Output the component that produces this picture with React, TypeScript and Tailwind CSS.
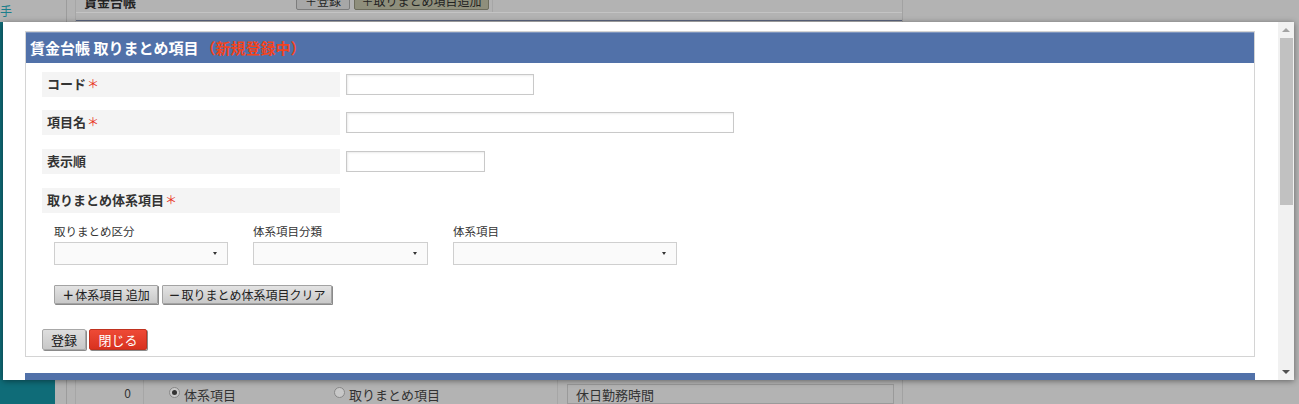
import React from "react";

const jp = { fontFamily: '"Noto Sans CJK JP", "Noto Sans", sans-serif' };

const Req = () => <span className="ml-[1px] text-[12px] font-normal text-[#e8341c]">＊</span>;

const Select = ({ w }: { w: string }) => (
    <div className={`${w} h-[23px] border border-[#cfcfcf] bg-[#fafafa] flex items-center justify-end pr-[10px]`}>
        <span className="block w-0 h-0 border-l-[2px] border-r-[2px] border-t-[3px] border-l-transparent border-r-transparent border-t-[#333]" />
    </div>
);

const App = () => {
    return (
        <div className="relative w-[1299px] h-[404px] overflow-hidden bg-[#b3b3b3] flex" style={jp}>
            {/* dimmed page underneath */}
            <div className="w-[55px] h-full flex flex-col">
                <div className="h-[22px] pt-[4px] text-[12px] leading-[14px] text-[#1c7f8c]">手</div>
                <div className="flex-1 bg-[#0f6c78]" />
            </div>
            <div className="w-[12px] h-full border-r border-[#9c9c9c]" />
            <div className="w-[9px] h-full border-r border-[#a6a6a6]" />
            <div className="w-[827px] h-full border-r border-[#a2a2a2] flex flex-col">
                <div className="h-[13px] border-b border-[#c4c4c4] flex items-start overflow-hidden">
                    <div className="w-[220px] pl-[8px] -mt-[7px] text-[13px] leading-[18px] font-bold text-[#222]">賃金台帳</div>
                    <div className="-mt-[8px] h-[18px] w-[54px] rounded-[2px] border border-[#7d7d7d] bg-[#a7a7a7] text-[12px] leading-[16px] text-[#222] text-center">＋登録</div>
                    <div className="-mt-[8px] ml-[4px] h-[18px] w-[135px] rounded-[2px] border border-[#6d6d5d] bg-[#8f8f7c] text-[12px] leading-[16px] text-[#222] text-center">＋取りまとめ項目追加</div>
                    <div className="h-[13px] ml-[3px] border-r border-[#a6a6a6]" />
                </div>
                <div className="h-[7px]" />
                <div className="h-[2px] bg-[#5c6680]" />
                <div className="h-[360px]" />
                <div className="flex-1 border-t border-[#9f9f9f] flex">
                    <div className="w-[68px] border-r border-[#a6a6a6] text-[12px] text-[#333] text-right pr-[12px] pt-[10px]">0</div>
                    <div className="flex-1 flex items-start pt-[11px] pl-[25px] text-[13px] text-[#333]">
                        <span className="mt-[2px] w-[11px] h-[11px] rounded-full border border-[#888] bg-[#c8c8c8] flex items-center justify-center"><span className="w-[5px] h-[5px] rounded-full bg-[#333]" /></span>
                        <span className="ml-[4px] w-[150px]">体系項目</span>
                        <span className="mt-[2px] w-[11px] h-[11px] rounded-full border border-[#888] bg-[#c8c8c8]" />
                        <span className="ml-[4px] w-[200px]">取りまとめ項目</span>
                    </div>
                    <div className="w-[345px] border-l border-[#a6a6a6] pl-[9px] pt-[10px]">
                        <div className="h-[20px] w-[327px] border border-[#9a9a9a] text-[13px] text-[#333] pl-[8px]">休日勤務時間</div>
                    </div>
                </div>
            </div>

            {/* modal */}
            <div className="absolute left-[3px] top-[22px] w-[1291px] h-[358px] bg-white shadow-[0_1px_6px_rgba(0,0,0,0.45)] flex">
                <div className="flex-1 h-full overflow-hidden pl-[22px] pr-[23px] pt-[9px]">
                    <div className="border border-[#d4d4d4]">
                        <div className="h-[31px] bg-[#5171a9] border-t border-[#7d94bd] pl-[4px] flex items-center text-[15px] font-bold text-white">
                            賃金台帳 取りまとめ項目<span className="text-[#f2441e] ml-[2px]">（新規登録中）</span>
                        </div>
                        <div className="pl-[16px] pt-[9px] pb-[6px] text-[#333]">
                            <div className="flex items-center">
                                <div className="w-[298px] h-[25px] bg-[#f4f4f4] pl-[5px] pb-[2px] flex items-center text-[13px] font-bold">コード<Req /></div>
                                <div className="ml-[6px] w-[188px] h-[21px] border border-[#c9c9c9] shadow-[inset_1px_1px_2px_rgba(0,0,0,0.08)]" />
                            </div>
                            <div className="flex items-center mt-[13px]">
                                <div className="w-[298px] h-[25px] bg-[#f4f4f4] pl-[5px] pb-[2px] flex items-center text-[13px] font-bold">項目名<Req /></div>
                                <div className="ml-[6px] w-[388px] h-[21px] border border-[#c9c9c9] shadow-[inset_1px_1px_2px_rgba(0,0,0,0.08)]" />
                            </div>
                            <div className="flex items-center mt-[14px]">
                                <div className="w-[298px] h-[25px] bg-[#f4f4f4] pl-[5px] pb-[2px] flex items-center text-[13px] font-bold">表示順</div>
                                <div className="ml-[6px] w-[139px] h-[21px] border border-[#c9c9c9] shadow-[inset_1px_1px_2px_rgba(0,0,0,0.08)]" />
                            </div>
                            <div className="flex items-center mt-[14px]">
                                <div className="w-[298px] h-[25px] bg-[#f4f4f4] pl-[5px] pb-[2px] flex items-center text-[13px] font-bold">取りまとめ体系項目<Req /></div>
                            </div>

                            <div className="pl-[12px] mt-[11px] flex gap-[25px] text-[11.5px] leading-[14px] text-[#333]">
                                <div className="flex flex-col gap-[4px]">
                                    <span>取りまとめ区分</span>
                                    <Select w="w-[174px]" />
                                </div>
                                <div className="flex flex-col gap-[4px]">
                                    <span>体系項目分類</span>
                                    <Select w="w-[175px]" />
                                </div>
                                <div className="flex flex-col gap-[4px]">
                                    <span>体系項目</span>
                                    <Select w="w-[224px]" />
                                </div>
                            </div>

                            <div className="pl-[12px] mt-[20px] flex gap-[4px] text-[12px] text-[#222]">
                                <button className="w-[104px] h-[19px] border border-[#a3a3a3] rounded-[1px] bg-gradient-to-b from-[#e3e3e3] to-[#c9c9c9] shadow-[1px_1px_0_#8a8a8a] flex items-center justify-center leading-none">
                                    <span className="font-bold mr-[1px]">＋</span>体系項目 追加
                                </button>
                                <button className="w-[170px] h-[19px] border border-[#a3a3a3] rounded-[1px] bg-gradient-to-b from-[#e3e3e3] to-[#c9c9c9] shadow-[1px_1px_0_#8a8a8a] flex items-center justify-center leading-none">
                                    <span className="font-bold mr-[1px]">－</span>取りまとめ体系項目クリア
                                </button>
                            </div>

                            <div className="mt-[25px] flex gap-[3px] text-[13px]">
                                <button className="w-[44px] h-[21px] border border-[#a8a8a8] rounded-[2px] bg-gradient-to-b from-[#dedede] to-[#c8c8c8] shadow-[1px_1px_0_#8a8a8a] text-[#111] leading-none">登録</button>
                                <button className="w-[58px] h-[21px] border border-[#c0321f] rounded-[2px] bg-gradient-to-b from-[#ee4a36] to-[#d9311f] shadow-[1px_1px_0_#8a8a8a] text-white leading-none">閉じる</button>
                            </div>
                        </div>
                    </div>
                    <div className="mt-[16px] h-[20px] bg-[#5171a9]" />
                </div>

                {/* scrollbar */}
                <div className="w-[16px] h-full bg-[#f1f1f1] flex flex-col items-center">
                    <div className="h-[16px] flex items-center justify-center">
                        <span className="block w-0 h-0 border-l-[4px] border-r-[4px] border-b-[4px] border-l-transparent border-r-transparent border-b-[#a3a3a3]" />
                    </div>
                    <div className="w-[13px] h-[167px] bg-[#c1c1c1]" />
                    <div className="flex-1" />
                    <div className="h-[16px] flex items-center justify-center">
                        <span className="block w-0 h-0 border-l-[4px] border-r-[4px] border-t-[4px] border-l-transparent border-r-transparent border-t-[#505050]" />
                    </div>
                </div>
            </div>
        </div>
    );
};

export default App;
